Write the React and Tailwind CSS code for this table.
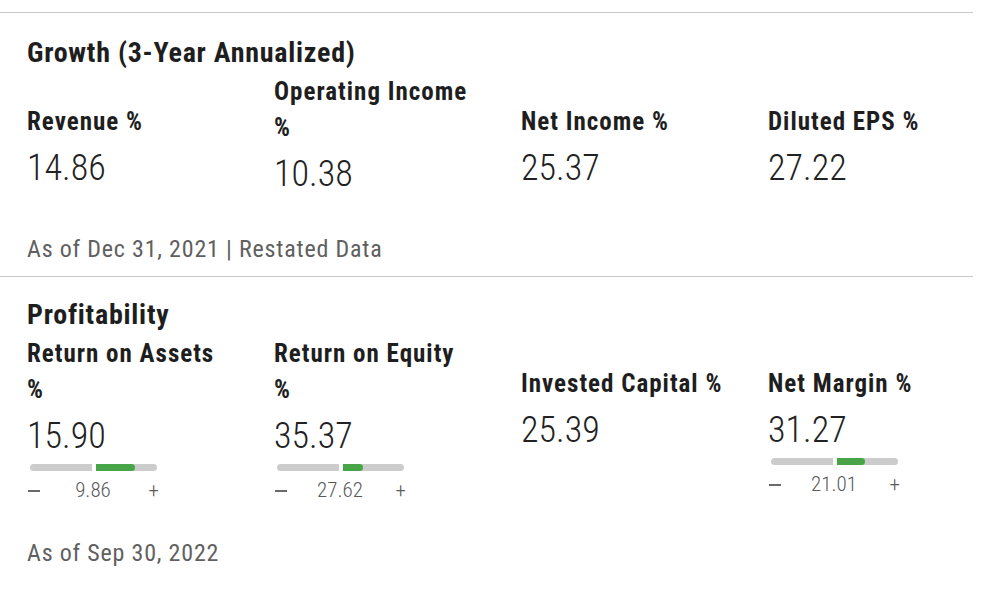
import React from 'react';

const GROWTH = [
  { label: ['Revenue %'], value: '14.86' },
  { label: ['Operating Income', '%'], value: '10.38' },
  { label: ['Net Income %'], value: '25.37' },
  { label: ['Diluted EPS %'], value: '27.22' },
];

const PROFIT = [
  { label: ['Return on Assets', '%'], value: '15.90', avg: '9.86', fill: 39 },
  { label: ['Return on Equity', '%'], value: '35.37', avg: '27.62', fill: 20 },
  { label: ['Invested Capital %'], value: '25.39' },
  { label: ['Net Margin %'], value: '31.27', avg: '21.01', fill: 28 },
];

function RangeBar({ avg, fill }) {
  return (
    <div className="w-[132px] mt-[8px]">
      <div className="relative ml-[3px] w-[127px] h-[7px] rounded-full bg-[#cccccc]">
        <div className="absolute top-0 left-[62px] w-[4px] h-full bg-white" />
        <div className="absolute top-0 left-[66px] h-full rounded-r-full bg-[#47a547]" style={{ width: fill }} />
      </div>
      <div className="mt-[7px] flex items-center justify-between text-[21px] leading-[24px] text-[#5a5a5a] font-light">
        <span className="w-[14px] flex items-center pt-[2px]">
          <span className="block w-[12px] h-[1.5px] bg-[#6a6a6a] ml-[1px]" />
        </span>
        <span>{avg}</span>
        <span className="w-[14px] text-right">+</span>
      </div>
    </div>
  );
}

function Metric({ label, value, avg, fill }) {
  return (
    <div className="flex flex-col">
      <div className="min-h-[66px] flex items-end">
        <div className="text-[25px] leading-[36px] tracking-[1px] font-bold text-[#1e1e1e] whitespace-nowrap">
          {label.map((l, i) => <div key={i}>{l}</div>)}
        </div>
      </div>
      <div className="mt-[8px] text-[36px] leading-[40px] font-light text-[#222]">{value}</div>
      {avg && <RangeBar avg={avg} fill={fill} />}
    </div>
  );
}

function Section({ title, items, note, className }) {
  return (
    <section className={`border-t border-[#c8c8c8] pl-[27px] ${className}`}>
      <h2 className="text-[28px] leading-[34px] tracking-[0.75px] font-bold text-[#1e1e1e] mb-[4px]">{title}</h2>
      <div className="grid grid-cols-[205px_205px_205px_205px] gap-x-[42px] items-start">
        {items.map(m => <Metric key={m.label.join(' ')} {...m} />)}
      </div>
      <p className="note text-[24px] leading-[32px] tracking-[0.8px] text-[#606060]">{note}</p>
    </section>
  );
}

export default function App() {
  return (
    <div className="w-[982px] h-[606px] bg-white overflow-hidden pt-[12px] font-['Roboto',sans-serif] [font-stretch:75%]">
      <div className="w-[973px]">
        <Section
          title="Growth (3-Year Annualized)"
          items={GROWTH}
          note="As of Dec 31, 2021 | Restated Data"
          className="pt-[23px] pb-[11px] [&_.note]:mt-[39px]"
        />
        <Section
          title="Profitability"
          items={PROFIT}
          note="As of Sep 30, 2022"
          className="pt-[21px] [&_.note]:mt-[35px]"
        />
      </div>
    </div>
  );
}
